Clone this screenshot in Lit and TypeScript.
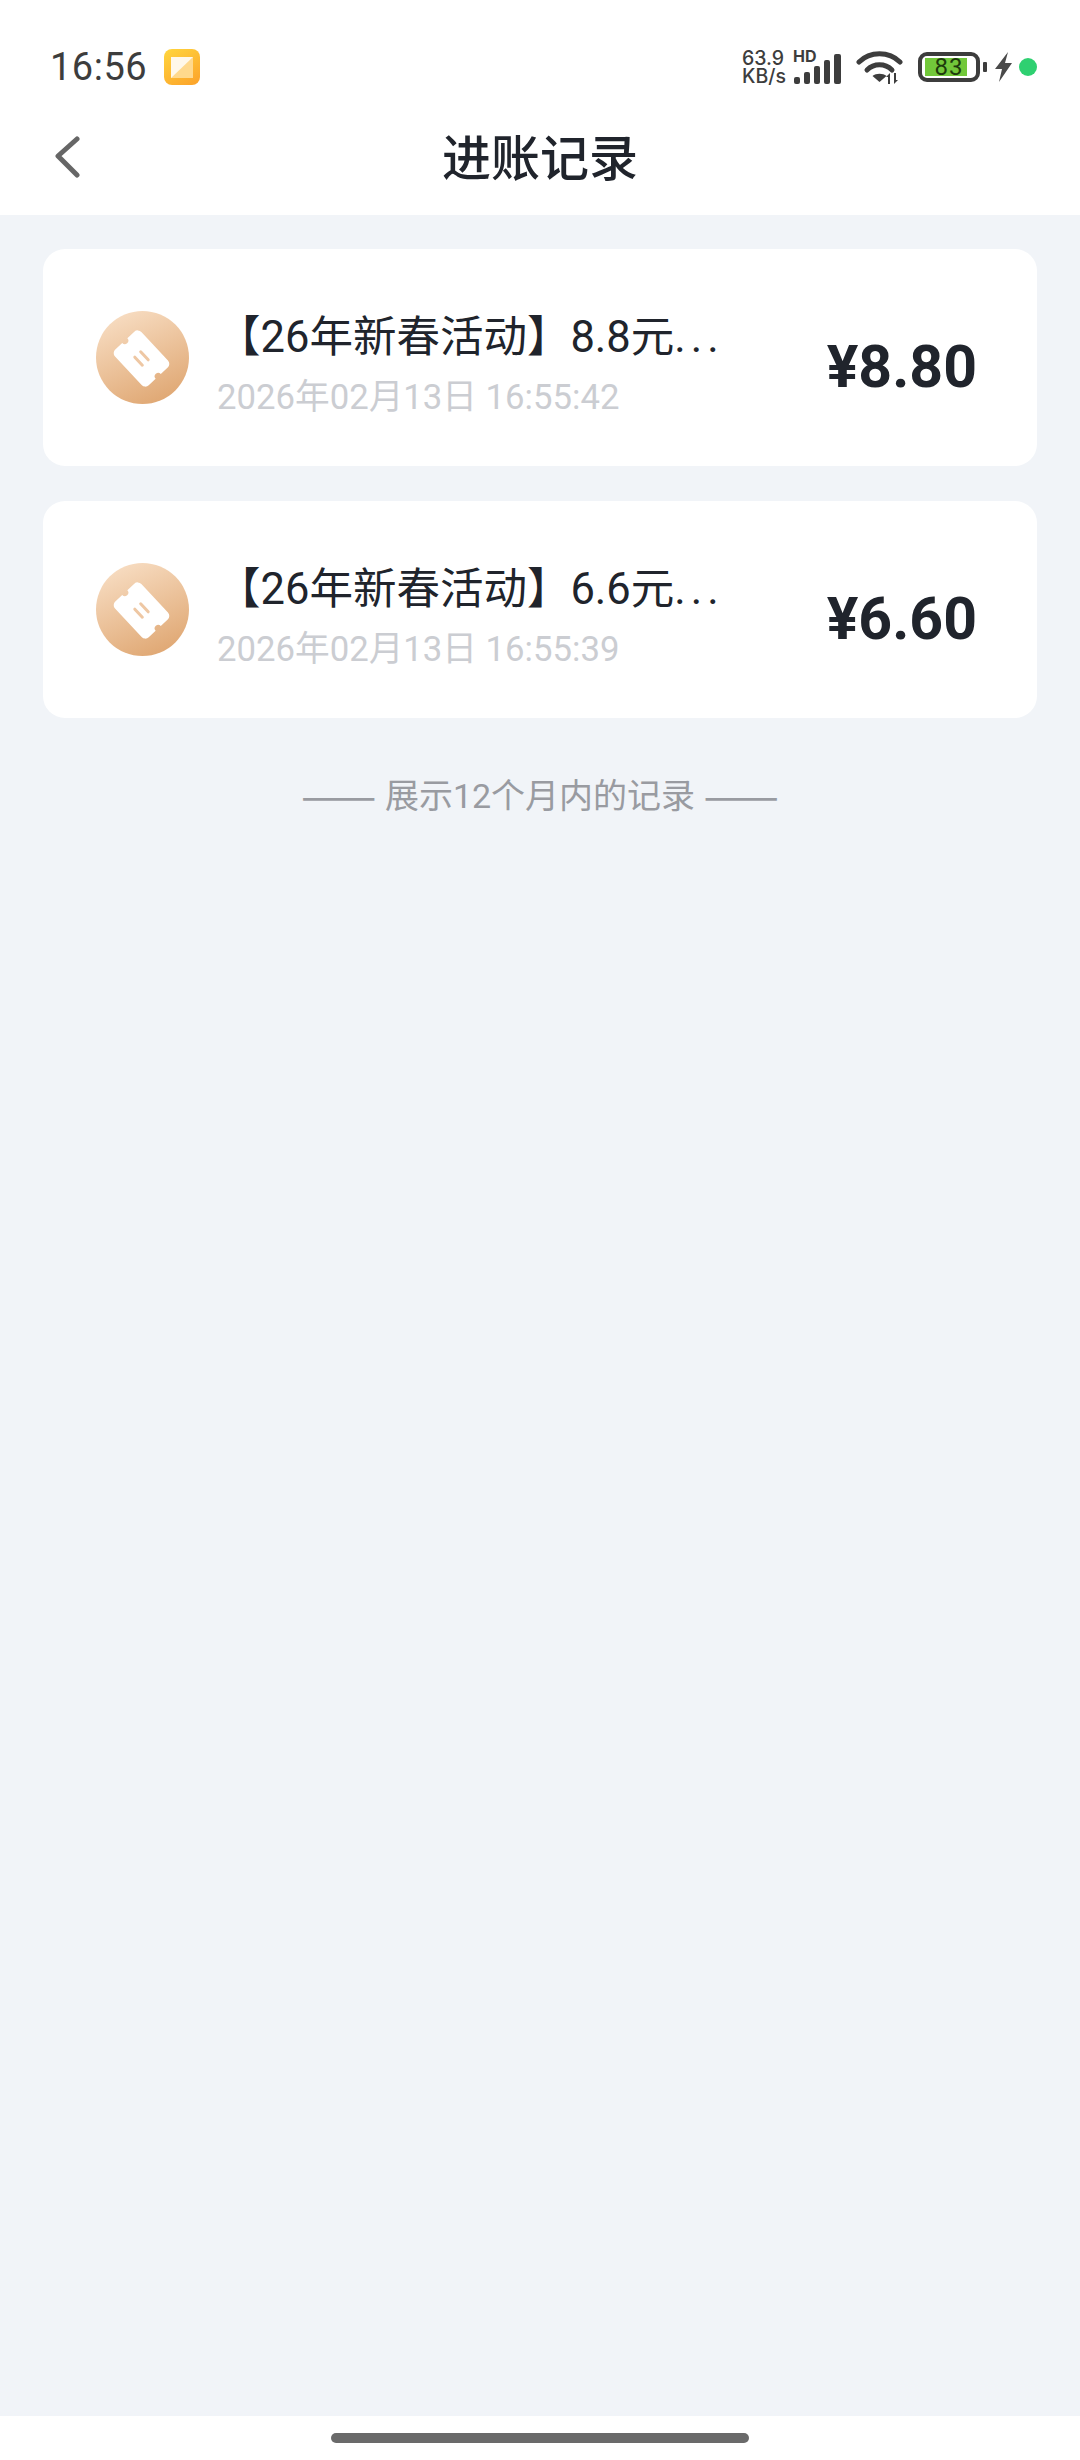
/**
 * Deposit records page: status bar, title bar, record cards, footer note.
 */
import { LitElement, html, css, svg } from "lit";
import { customElement } from "lit/decorators.js";

interface DepositRecord {
  title: string;
  time: string;
  amount: string;
}

const RECORDS: DepositRecord[] = [
  { title: "【26年新春活动】8.8元", time: "2026年02月13日 16:55:42", amount: "¥8.80" },
  { title: "【26年新春活动】6.6元", time: "2026年02月13日 16:55:39", amount: "¥6.60" },
];

const ticketIcon = svg`
  <svg class="ticket" viewBox="0 0 93 93" width="93" height="93">
    <defs>
      <linearGradient id="coin" x1="0.3" y1="0" x2="0.75" y2="1">
        <stop offset="0" stop-color="#f7dcc1" />
        <stop offset="1" stop-color="#dfa671" />
      </linearGradient>
    </defs>
    <circle cx="46.5" cy="46.5" r="46.5" fill="url(#coin)" />
    <g transform="translate(45.5 47.5) rotate(47)">
      <path fill="#fff" d="M-19.500 -18 H19.500 a5 5 0 0 1 5 5 V-3.500 a3.500 3.500 0 0 0 0 7 V13 a5 5 0 0 1 -5 5 H-19.500 a5 5 0 0 1 -5 -5 V3.500 a3.500 3.500 0 0 0 0 -7 V-13 a5 5 0 0 1 5 -5 Z" />
      <path stroke="#eec7a3" stroke-width="3" stroke-linecap="round" fill="none" d="M-5.500 -4 H5.500 M-5.500 4 H5.500" />
    </g>
  </svg>
`;

@customElement("app-root")
export class AppRoot extends LitElement {
  static styles = css`
    :host {
      display: flex;
      flex-direction: column;
      height: 2460px;
      background: #f1f4f8;
      font-family: "Roboto", "Noto Sans CJK SC", sans-serif;
    }

    /* Status bar */
    .status {
      height: 66px;
      padding: 34px 43px 0 50px;
      display: flex;
      align-items: center;
      background: #fff;
      color: #3d3d3d;
    }

    .clock {
      font-size: 38px;
      font-weight: 400;
      letter-spacing: 0.5px;
    }

    .app-badge {
      margin-left: 17px;
    }

    .status-right {
      margin-left: auto;
      display: flex;
      align-items: center;
    }

    .speed {
      font-family: "Inter", sans-serif;
      font-size: 19.5px;
      font-weight: 500;
      line-height: 18px;
      width: 51px;
    }

    .speed div {
      white-space: nowrap;
    }

    .signal {
      position: relative;
      width: 50px;
      height: 34px;
      margin-right: 13px;
    }

    .signal svg {
      display: block;
    }

    .hd {
      position: absolute;
      left: 0;
      top: -3px;
      font-family: "Inter", sans-serif;
      font-size: 16px;
      font-weight: 700;
      line-height: 18px;
    }

    .battery {
      margin-left: 15px;
      width: 62px;
      height: 30px;
      box-sizing: border-box;
      border: 4px solid #3d3d3d;
      border-radius: 9px;
      padding: 2px 9px 2px 3px;
      display: flex;
    }

    .battery-fill {
      flex: 1;
      background: #72c83a;
      color: #1d3b0c;
      font-size: 24px;
      line-height: 18px;
      text-align: center;
      letter-spacing: 1px;
      padding-left: 6px;
    }

    .battery-tip {
      width: 4px;
      height: 10px;
      margin-left: 3px;
      border-radius: 1px;
      background: #3d3d3d;
    }

    .bolt {
      margin-left: 8px;
    }

    .dot {
      width: 18px;
      height: 18px;
      margin-left: 7px;
      border-radius: 50%;
      background: #2fd071;
    }

    /* Title bar */
    .nav {
      height: 115px;
      box-sizing: border-box;
      padding-bottom: 6px;
      background: #fff;
      position: relative;
      display: flex;
      align-items: center;
      justify-content: center;
    }

    .back {
      position: absolute;
      left: 53px;
      top: 36px;
    }

    .nav-title {
      font-size: 49px;
      font-weight: 500;
      color: #20242c;
    }

    /* Records */
    .list {
      flex: 1;
      padding: 34px 43px 0;
      display: flex;
      flex-direction: column;
      gap: 35px;
    }

    .card {
      height: 217px;
      box-sizing: border-box;
      padding: 0 60px 0 53px;
      background: #fff;
      border-radius: 22px;
      display: flex;
      align-items: center;
    }

    .ticket {
      flex: none;
      display: block;
    }

    .info {
      margin-left: 28px;
      padding-top: 15px;
    }

    .title {
      font-size: 43.5px;
      line-height: 56px;
      color: #20242c;
      white-space: nowrap;
    }

    .more {
      letter-spacing: 5px;
    }

    .time {
      margin-top: 8px;
      font-size: 34.7px;
      line-height: 46px;
      color: #cbcdd2;
      white-space: nowrap;
    }

    .amount {
      margin-left: auto;
      padding-top: 18px;
      font-size: 59px;
      font-weight: 700;
      color: #20242c;
      white-space: nowrap;
    }

    .note {
      margin-top: 17px;
      text-align: center;
      font-size: 34px;
      line-height: 48px;
      color: #999ba1;
    }

    .note-dash {
      font-family: "Noto Sans CJK SC", sans-serif;
      font-size: 45px;
      line-height: 1;
      vertical-align: -4px;
    }

    /* Gesture bar */
    .gesture {
      height: 44px;
      background: #fff;
      display: flex;
      justify-content: center;
      padding-top: 17px;
      box-sizing: border-box;
    }

    .gesture-pill {
      width: 418px;
      height: 10px;
      border-radius: 5px;
      background: #6a6a6a;
    }
  `;

  private renderStatus() {
    return html`
      <div class="status">
        <span class="clock">16:56</span>
        <svg class="app-badge" width="36" height="36" viewBox="0 0 36 36">
          <defs>
            <linearGradient id="badge" x1="0.2" y1="0" x2="0.8" y2="1">
              <stop offset="0" stop-color="#ffd23c" />
              <stop offset="1" stop-color="#fca52b" />
            </linearGradient>
          </defs>
          <rect width="36" height="36" rx="8" fill="url(#badge)" />
          <rect x="7" y="8" width="22" height="21" fill="#ffd98d" />
          <path d="M7 29 L29 8 H7 Z" fill="#fff8ea" />
        </svg>
        <div class="status-right">
          <div class="speed"><div>63.9</div><div>KB/s</div></div>
          <div class="signal">
            <svg width="50" height="34" viewBox="0 0 50 34">
              <g fill="#3d3d3d">
                <rect x="1" y="27" width="6" height="7" rx="2" />
                <rect x="11" y="22" width="6" height="12" rx="2" />
                <rect x="21" y="16" width="6" height="18" rx="2" />
                <rect x="31" y="10" width="6" height="24" rx="2" />
                <rect x="41" y="4" width="7" height="30" rx="2" />
              </g>
            </svg>
            <span class="hd">HD</span>
          </div>
          <svg width="47" height="34" viewBox="0 0 47 34">
            <g fill="none" stroke="#3d3d3d" stroke-width="5" stroke-linecap="round">
              <path d="M3 12 C14 1 33 1 44 12" />
              <path d="M11 20 C18 13 29 13 36 20" />
            </g>
            <path d="M16.500 26 C20 23 27 23 30.500 26 L23.500 32 Z" fill="#3d3d3d" />
            <path d="M32 34 V27 H30 L34 23 V34 Z M38 23 V34 L42 30 H40 V23 Z" fill="#3d3d3d" />
          </svg>
          <div class="battery"><div class="battery-fill">83</div></div>
          <div class="battery-tip"></div>
          <svg class="bolt" width="17" height="30" viewBox="0 0 17 30">
            <path d="M13 0 L0 17 H7 L4 30 L17 11 H10 Z" fill="#4a4a4a" />
          </svg>
          <div class="dot"></div>
        </div>
      </div>
    `;
  }

  render() {
    return html`
      ${this.renderStatus()}
      <div class="nav">
        <svg class="back" width="28" height="42" viewBox="0 0 28 42">
          <path d="M24 3 L5 20 L24 39" fill="none" stroke="#666" stroke-width="5" stroke-linecap="round" stroke-linejoin="round" />
        </svg>
        <span class="nav-title">进账记录</span>
      </div>
      <div class="list">
        ${RECORDS.map(
          (r) => html`
            <div class="card">
              ${ticketIcon}
              <div class="info">
                <div class="title">${r.title}<span class="more">...</span></div>
                <div class="time">${r.time}</div>
              </div>
              <div class="amount">${r.amount}</div>
            </div>
          `
        )}
        <div class="note"><span class="note-dash">——</span> 展示12个月内的记录 <span class="note-dash">——</span></div>
      </div>
      <div class="gesture"><div class="gesture-pill"></div></div>
    `;
  }
}

declare global {
  interface HTMLElementTagNameMap {
    "app-root": AppRoot;
  }
}
